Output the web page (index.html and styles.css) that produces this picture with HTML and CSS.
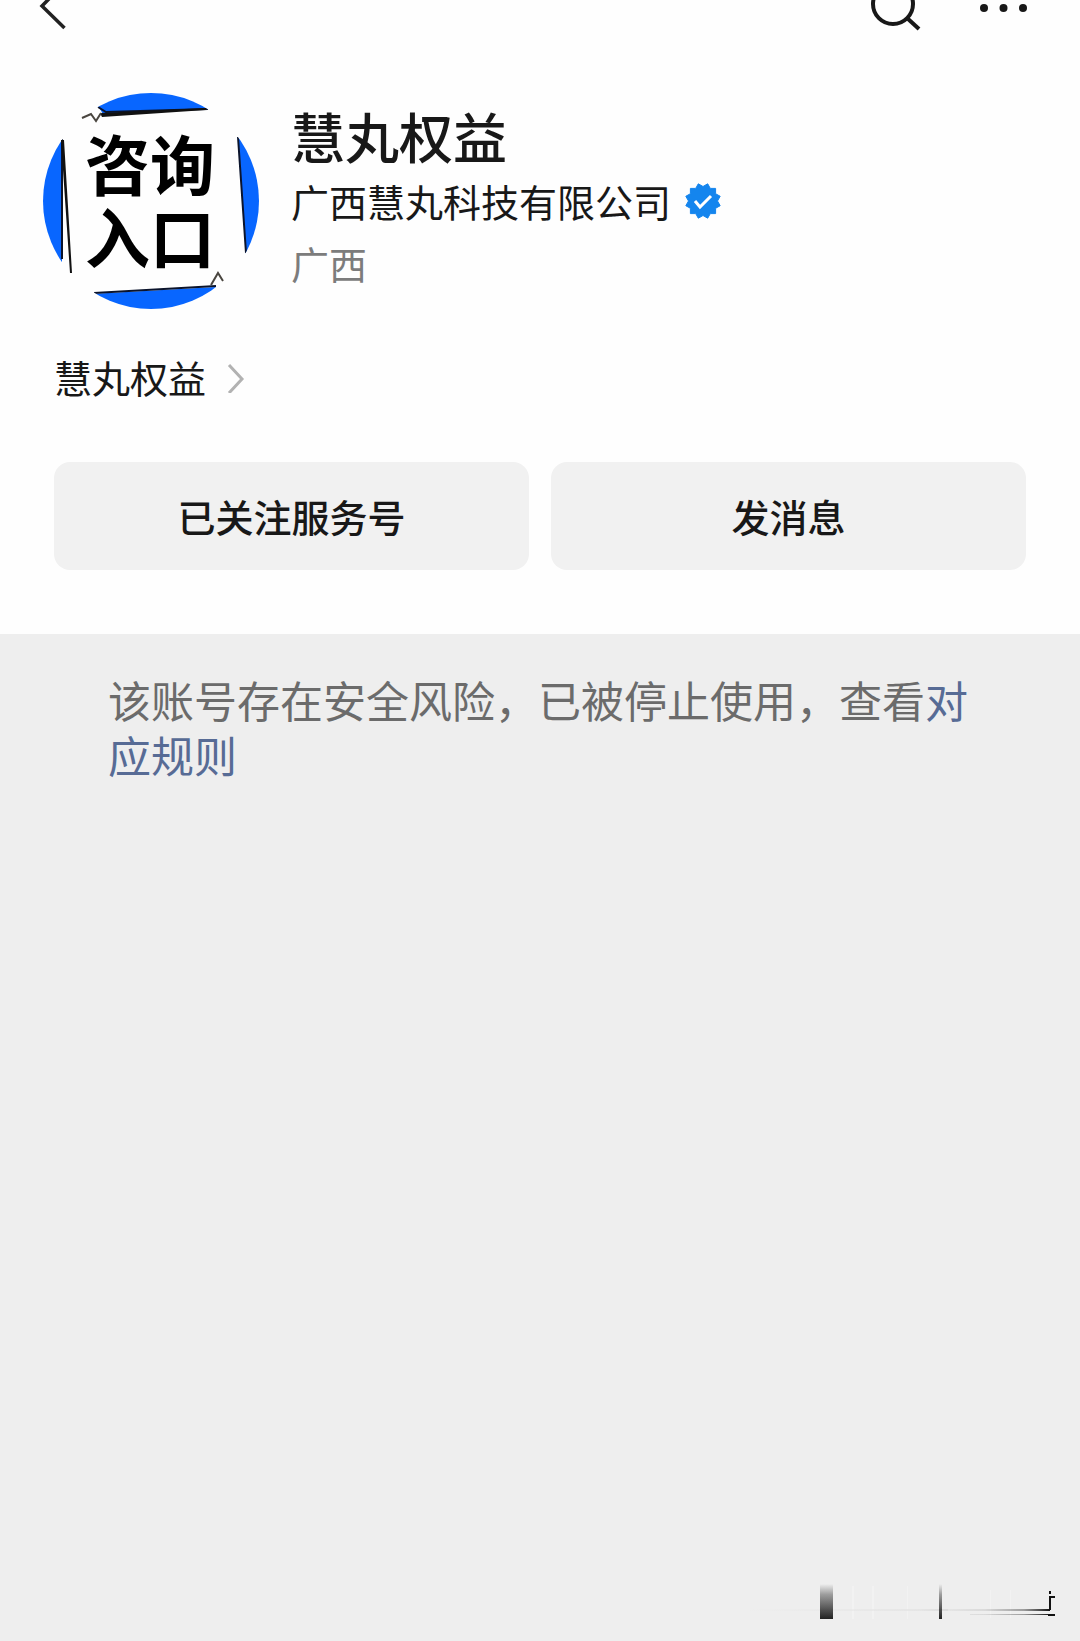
FILE: index.html
```html
<!DOCTYPE html>
<html lang="zh-CN">
<head>
<meta charset="utf-8">
<meta name="viewport" content="width=device-width, initial-scale=1">
<title>慧丸权益</title>
<link rel="stylesheet" href="styles.css">
</head>
<body>
<header class="topbar">
  <button class="icon-button" type="button" aria-label="返回">
    <svg width="32" height="32" viewBox="36 0 32 32"><path d="M64.500-17 42 6 64.500 28" fill="none" stroke="#222" stroke-width="3.500"/></svg>
  </button>
  <div class="topbar-actions">
    <button class="icon-button" type="button" aria-label="搜索">
      <svg width="52" height="32" viewBox="870 0 52 32"><g fill="none" stroke="#181818" stroke-width="4"><circle cx="893" cy="4" r="20"/><path d="M907 18 919 29"/></g></svg>
    </button>
    <button class="icon-button" type="button" aria-label="更多">
      <svg width="48" height="32" viewBox="979 0 48 32" fill="#181818"><circle cx="984" cy="8" r="4"/><circle cx="1003.500" cy="8" r="4"/><circle cx="1023" cy="8" r="4"/></svg>
    </button>
  </div>
</header>
<main class="page">
  <section class="profile">
    <div class="identity">
      <svg class="avatar" width="216" height="216" viewBox="43 93 216 216" role="img" aria-label="咨询入口">
        <defs><clipPath id="disc"><circle cx="151" cy="201" r="108"/></clipPath></defs>
        <g clip-path="url(#disc)">
          <path fill="#fefefe" d="M43 93h216v216H43z"/>
          <g fill="#0866ff">
            <path d="M98 106V90H212V109L103 114z"/>
            <path d="M40 130H62V265H40z"/>
            <path d="M238 130 246 258H262V130z"/>
            <path d="M90 294 216 287V312H90z"/>
          </g>
          <g fill="none" stroke="#0b142c" stroke-width="2">
            <path d="M98 107 106 112 208 109M62 139V259M238 137 246 253M94 293 216 286"/>
          </g>
        </g>
        <path fill="#111" d="M100 113 206 108 206 110 102 117zM61 140 64 140 72 273 70 273z"/>
        <path fill="none" stroke="#4a4640" stroke-width="2" d="M82 118 91 114 96 121 101 113M211 285 218 273 223 281"/>
        <g class="avatar-text"><text x="85" y="190">咨询</text><text x="85" y="263">入口</text></g>
      </svg>
      <div class="details">
        <h1 class="name">慧丸权益</h1>
        <p class="company">广西慧丸科技有限公司
          <svg width="36" height="36" viewBox="-18 -18 36 36" role="img" aria-label="已认证"><path fill="#1485ee" stroke="#1485ee" stroke-linejoin="round" d="M-4.700-17.200 0-14.500 4.700-17.200 7.300-12.600 12.600-12.600 12.600-7.300 17.200-4.700 14.500 0 17.200 4.700 12.600 7.300 12.600 12.600 7.300 12.600 4.700 17.200 0 14.500-4.700 17.200-7.300 12.600-12.600 12.600-12.600 7.300-17.200 4.700-14.500 0-17.200-4.700-12.600-7.300-12.600-12.600-7.300-12.600z"/><path fill="none" stroke="#fff" stroke-width="3" d="M-8 0-3 6 8-5"/></svg>
        </p>
        <p class="region">广西</p>
      </div>
    </div>
    <a class="intro" href="#intro">慧丸权益
      <svg width="18" height="32" viewBox="0 0 18 32" aria-hidden="true"><path d="M2 4 15 18 2 32" fill="none" stroke="#b2b2b2" stroke-width="3"/></svg>
    </a>
    <div class="actions">
      <button class="action" type="button">已关注服务号</button>
      <button class="action" type="button">发消息</button>
    </div>
  </section>
  <p class="notice">该账号存在安全风险，已被停止使用，查看<a href="#rules">对应规则</a></p>
</main>
<footer class="mark">
  <svg width="310" height="44" viewBox="745 1580 310 44" aria-hidden="true">
    <defs>
      <linearGradient id="down" x1="0" y1="0" x2="0" y2="1"><stop offset="0" stop-color="#222" stop-opacity="0"/><stop offset=".3" stop-color="#222" stop-opacity=".4"/><stop offset="1" stop-color="#222"/></linearGradient>
      <linearGradient id="across"><stop offset="0" stop-color="#222" stop-opacity="0"/><stop offset=".5" stop-color="#222" stop-opacity=".1"/><stop offset=".8" stop-color="#222" stop-opacity=".4"/><stop offset="1" stop-color="#111"/></linearGradient>
      <linearGradient id="haze"><stop offset="0" stop-color="#e4e4e4" stop-opacity="0"/><stop offset="1" stop-color="#e4e4e4"/></linearGradient>
    </defs>
    <path fill="#f2f2f2" d="M852 1586h2v33h-2zM872 1586h2v33h-2zM907 1586h1v33h-1zM990 1590h1v28h-1zM1010 1590h1v28h-1z"/>
    <path fill="url(#haze)" d="M748 1609h200v2H748z"/>
    <path fill="url(#down)" d="M820 1584h13v35h-13zM939 1584h3v35h-3z"/>
    <path fill="url(#across)" d="M920 1609h130v2H920zM970 1614h80v1h-80z"/>
    <path fill="#111" d="M1049 1591h2v3h-2zM1049 1596h6v2h-4v12h-2zM1048 1614h7v2h-7z"/>
  </svg>
</footer>
</body>
</html>
```
FILE: styles.css
```css
* { box-sizing: border-box; }

body {
  margin: 0;
  min-height: 100vh;
  display: flex;
  flex-direction: column;
  background: #eee;
  color: #181818;
  font-family: "Noto Sans CJK SC", sans-serif;
  font-size: 38px;
}

h1, p { margin: 0; }
svg { display: block; flex: none; }
a { text-decoration: none; }

button {
  border: 0;
  padding: 0;
  color: inherit;
  font: inherit;
  cursor: pointer;
}

.topbar {
  display: flex;
  justify-content: space-between;
  padding: 0 53px 0 36px;
  background: #fefefe;
}

.topbar-actions { display: flex; gap: 57px; }
.icon-button { background: none; }
.page { flex: 1; }

.profile {
  padding: 61px 54px 64px;
  background: #fefefe;
}

.identity {
  display: flex;
  gap: 32px;
  margin-left: -11px;
}

.avatar-text {
  font-size: 65px;
  font-weight: 700;
}

.details { padding-top: 8px; }

.name {
  font-size: 54px;
  font-weight: 500;
  line-height: 70px;
}

.company {
  display: flex;
  align-items: center;
  gap: 14px;
  line-height: 60px;
}

.region {
  color: #7c7c7c;
  line-height: 64px;
}

.intro {
  display: flex;
  align-items: center;
  gap: 21px;
  width: fit-content;
  margin-top: 40px;
  color: inherit;
  line-height: 56px;
}

.actions {
  display: grid;
  grid-template-columns: 1fr 1fr;
  gap: 22px;
  margin-top: 57px;
}

.action {
  height: 108px;
  padding-bottom: 2px;
  border-radius: 16px;
  background: #f1f1f1;
  font-weight: 500;
}

.notice {
  padding: 38px 108px;
  color: #6b6b6b;
  font-size: 43px;
  line-height: 55px;
}

.notice a { color: #576b95; }

.mark {
  display: flex;
  justify-content: flex-end;
  padding: 0 25px 17px;
}
```
